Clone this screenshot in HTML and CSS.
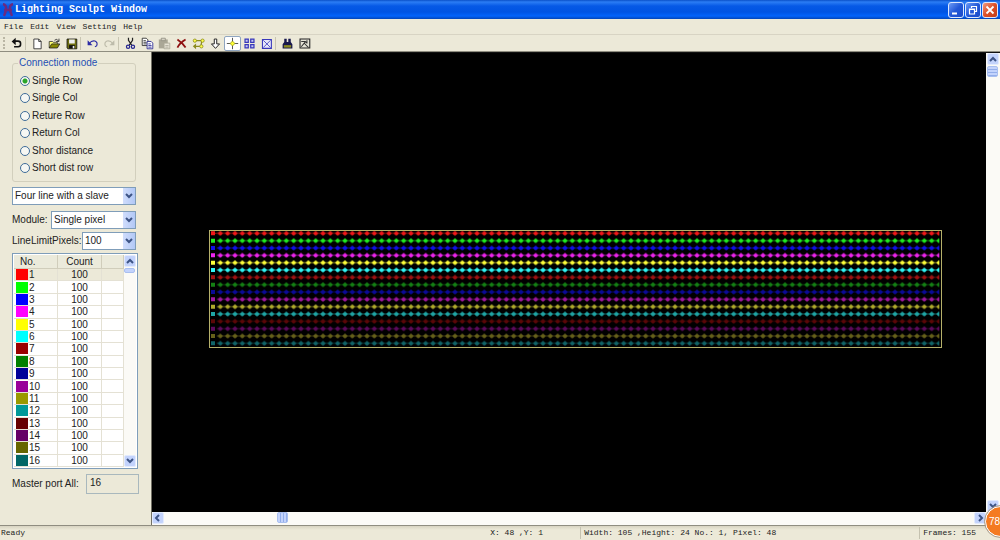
FILE: index.html
```html
<!DOCTYPE html>
<html lang="en">
<head>
<meta charset="utf-8">
<title>Lighting Sculpt Window</title>
<link rel="stylesheet" href="styles.css">
</head>
<body>
<svg class="defs" aria-hidden="true">
  <symbol id="chev-down" viewBox="0 0 8 8"><path d="M1 2l3 3 3-3" fill="none" stroke="#3d5486" stroke-width="2"/></symbol>
  <symbol id="chev-up" viewBox="0 0 8 8"><path d="M1 6l3-3 3 3" fill="none" stroke="#3d5486" stroke-width="2"/></symbol>
  <symbol id="chev-left" viewBox="0 0 8 8"><path d="M5 1L2 4l3 3" fill="none" stroke="#3d5486" stroke-width="2"/></symbol>
  <symbol id="chev-right" viewBox="0 0 8 8"><path d="M3 1l3 3-3 3" fill="none" stroke="#3d5486" stroke-width="2"/></symbol>
</svg>
<div class="window">
  <header class="titlebar">
    <svg class="logo" viewBox="0 0 12 14"><path d="M1 1c4 1 4 5 1 12M11 1c-4 1-4 5-1 12M2 7h8" fill="none" stroke="#6a2a80" stroke-width="2.400"/></svg>
    <h1 class="title">Lighting Sculpt Window</h1>
    <div class="window-buttons">
      <button class="win-btn" aria-label="Minimize"><svg viewBox="0 0 14 14"><path d="M3 10.500h5" stroke="#fff" stroke-width="2"/></svg></button>
      <button class="win-btn" aria-label="Restore"><svg viewBox="0 0 14 14"><path d="M5.500 5V3.500h5v5H9M3.500 6h5v5h-5z" fill="none" stroke="#fff" stroke-width="1.200"/><path d="M5 3.500h6M3 6.500h6" stroke="#fff"/></svg></button>
      <button class="win-btn close" aria-label="Close"><svg viewBox="0 0 14 14"><path d="M3.500 3.500l7 7M10.500 3.500l-7 7" stroke="#fff" stroke-width="1.800"/></svg></button>
    </div>
  </header>
  <nav class="menubar">
    <button>File</button><button>Edit</button><button>View</button><button>Setting</button><button>Help</button>
  </nav>
  <div class="toolbar">
    <span class="grip"></span>
    <button class="tool" aria-label="Back"><svg viewBox="0 0 16 16"><path d="M4 5h6a3 3 0 0 1 3 3v1a3 3 0 0 1-3 3H5" fill="none" stroke="#111" stroke-width="2"/><path d="M2 5.500L7 1v9z" fill="#111"/></svg></button>
    <span class="sep"></span>
    <button class="tool" aria-label="New"><svg viewBox="0 0 16 16"><path d="M3.500 2.500h6l3 3v9h-9z" fill="#fff" stroke="#222"/><path d="M9.500 2.500v3h3" fill="none" stroke="#222"/></svg></button>
    <button class="tool" aria-label="Open"><svg viewBox="0 0 16 16"><path d="M1.500 13.500v-8h4l1 1h5v2" fill="#ffff70" stroke="#333"/><path d="M1.500 13.500l3-5h10l-3 5z" fill="#898900" stroke="#222"/><path d="M8 4q3-3 5 1M13.500 2v3.500H10" fill="none" stroke="#222"/></svg></button>
    <button class="tool" aria-label="Save"><svg viewBox="0 0 16 16"><path d="M2.500 2.500h12v12h-11l-1-1z" fill="#6e6e10" stroke="#111"/><path d="M5 3h7v5H5z" fill="#eee"/><path d="M5 10h7v4H5z" fill="#111"/><path d="M9.500 11h2v3h-2z" fill="#eee"/></svg></button>
    <span class="sep"></span>
    <button class="tool" aria-label="Undo"><svg viewBox="0 0 16 16"><path d="M4 8q3-4 7-3 4 2 2 6l-2 1" fill="none" stroke="#2b2ba5" stroke-width="1.400"/><path d="M2 4v6h6z" fill="#2b2ba5"/></svg></button>
    <button class="tool" aria-label="Redo"><svg viewBox="0 0 16 16"><path d="M12 8q-3-4-7-3-4 2-2 6l2 1" fill="none" stroke="#bdbbaa" stroke-width="1.400"/><path d="M14 4v6H8z" fill="#bdbbaa"/></svg></button>
    <span class="sep"></span>
    <button class="tool" aria-label="Cut"><svg viewBox="0 0 16 16"><path d="M5.500 1v3l4 6M10.500 1v3l-4 6" fill="none" stroke="#222" stroke-width="1.500"/><circle cx="5" cy="12" r="2" fill="none" stroke="#25258f" stroke-width="1.500"/><circle cx="11" cy="12" r="2" fill="none" stroke="#25258f" stroke-width="1.500"/></svg></button>
    <button class="tool" aria-label="Copy"><svg viewBox="0 0 16 16"><path d="M1.500 1.500h5l2 2v7h-7z" fill="#fff" stroke="#222"/><path d="M3 4.500h3M3 6.500h4M3 8.500h4" stroke="#222"/><path d="M7.500 5.500h5l2 2v7h-7z" fill="#fff" stroke="#1d1d8c"/><path d="M9 8.500h3M9 10.500h4M9 12.500h4" stroke="#1d1d8c"/></svg></button>
    <button class="tool" aria-label="Paste" disabled><svg viewBox="0 0 16 16"><path d="M1 3h11v11H1z" fill="#aaa796"/><path d="M4 1.500h5v3H4z" fill="#d5d2c4" stroke="#908e80"/><path d="M7.500 7.500h7v7h-7z" fill="#e6e3d5" stroke="#aaa796"/><path d="M9 10.500h4M9 12.500h4" stroke="#aaa796"/></svg></button>
    <button class="tool" aria-label="Delete"><svg viewBox="0 0 16 16"><path d="M3 3q6 4 10 10M13 3Q6 7 3 13" fill="none" stroke="#8e1010" stroke-width="2.200"/></svg></button>
    <button class="tool" aria-label="Connect"><svg viewBox="0 0 16 16"><path d="M4 4.500h8l-1 7H3" fill="none" stroke="#8a8a20" stroke-width="1.500"/><g fill="#ffff45" stroke="#8a8a20"><circle cx="3.500" cy="4.500" r="2"/><circle cx="13" cy="4.500" r="2"/><circle cx="11.500" cy="11.500" r="2"/></g><path d="M5 8l-4 3.500L5 15z" fill="#8a8a20"/></svg></button>
    <button class="tool" aria-label="Down"><svg viewBox="0 0 16 16"><path d="M6.500 2.500h3v6h3.500L8 14 3 8.500h3.500z" fill="#fff" stroke="#222" stroke-width="1.200"/></svg></button>
    <button class="tool pressed" aria-label="Point"><svg viewBox="0 0 16 16"><path d="M8 1v14M1 8h14" stroke="#333"/><path d="M8 5l3 3-3 3-3-3z" fill="#ffff35" stroke="#9a9a15"/></svg></button>
    <button class="tool" aria-label="Grid"><svg viewBox="0 0 16 16"><path d="M2.500 2.500h4v4h-4zM9.500 2.500h4v4h-4zM2.500 9.500h4v4h-4zM9.500 9.500h4v4h-4z" fill="#c7c8f0" stroke="#3838ba" stroke-width="1.500"/></svg></button>
    <button class="tool" aria-label="Frame"><svg viewBox="0 0 16 16"><path d="M3 3h11v11H3z" fill="#e8e8fa" stroke="#3838ba" stroke-width="1.300"/><path d="M4 4l9 9M13 4l-9 9" stroke="#3838ba"/></svg></button>
    <span class="sep"></span>
    <button class="tool" aria-label="Find"><svg viewBox="0 0 16 16"><path d="M4 2h3v4h2V2h3v4l2 3v5H2V9l2-3z" fill="#17174c"/><path d="M3.500 10h9v3h-9z" fill="#8b8b22"/></svg></button>
    <button class="tool" aria-label="Tools"><svg viewBox="0 0 16 16"><path d="M2.500 2.500h12v11h-12z" fill="#e6e4d8" stroke="#222" stroke-width="1.300"/><path d="M4 5.500h5l2 2M4 12l5-6M8 8l5 5M11 4v4" fill="none" stroke="#333" stroke-width="1.300"/></svg></button>
  </div>
  <main class="workspace">
    <aside class="sidebar">
      <fieldset class="modes">
        <legend>Connection mode</legend>
        <div class="mode-list">
          <label><input type="radio" name="mode" checked>Single Row</label>
          <label><input type="radio" name="mode">Single Col</label>
          <label><input type="radio" name="mode">Reture Row</label>
          <label><input type="radio" name="mode">Return Col</label>
          <label><input type="radio" name="mode">Shor distance</label>
          <label><input type="radio" name="mode">Short dist row</label>
        </div>
      </fieldset>
      <div class="field line-type">
        <span class="combo"><select aria-label="Line type"><option>Four line with a slave</option></select><span class="combo-arrow"><svg><use href="#chev-down"/></svg></span></span>
      </div>
      <div class="field">
        <label for="module">Module:</label>
        <span class="combo module"><select id="module"><option>Single pixel</option></select><span class="combo-arrow"><svg><use href="#chev-down"/></svg></span></span>
      </div>
      <div class="field">
        <label for="limit">LineLimitPixels:</label>
        <span class="combo limit"><select id="limit"><option>100</option></select><span class="combo-arrow"><svg><use href="#chev-down"/></svg></span></span>
      </div>
      <div class="ports">
        <table>
          <thead><tr><th class="no">No.</th><th class="count">Count</th><th></th></tr></thead>
          <tbody>
            <tr class="selected"><td><i class="swatch c1"></i>1</td><td>100</td><td></td></tr>
            <tr><td><i class="swatch c2"></i>2</td><td>100</td><td></td></tr>
            <tr><td><i class="swatch c3"></i>3</td><td>100</td><td></td></tr>
            <tr><td><i class="swatch c4"></i>4</td><td>100</td><td></td></tr>
            <tr><td><i class="swatch c5"></i>5</td><td>100</td><td></td></tr>
            <tr><td><i class="swatch c6"></i>6</td><td>100</td><td></td></tr>
            <tr><td><i class="swatch c7"></i>7</td><td>100</td><td></td></tr>
            <tr><td><i class="swatch c8"></i>8</td><td>100</td><td></td></tr>
            <tr><td><i class="swatch c9"></i>9</td><td>100</td><td></td></tr>
            <tr><td><i class="swatch c10"></i>10</td><td>100</td><td></td></tr>
            <tr><td><i class="swatch c11"></i>11</td><td>100</td><td></td></tr>
            <tr><td><i class="swatch c12"></i>12</td><td>100</td><td></td></tr>
            <tr><td><i class="swatch c13"></i>13</td><td>100</td><td></td></tr>
            <tr><td><i class="swatch c14"></i>14</td><td>100</td><td></td></tr>
            <tr><td><i class="swatch c15"></i>15</td><td>100</td><td></td></tr>
            <tr><td><i class="swatch c16"></i>16</td><td>100</td><td></td></tr>
          </tbody>
        </table>
        <div class="scroll vertical">
          <button class="scroll-btn" aria-label="Scroll list up"><svg><use href="#chev-up"/></svg></button>
          <span class="thumb short"></span>
          <button class="scroll-btn end" aria-label="Scroll list down"><svg><use href="#chev-down"/></svg></button>
        </div>
      </div>
      <div class="field total">
        <label for="total">Master port All:</label>
        <input id="total" type="text" value="16" readonly>
      </div>
    </aside>
    <section class="view">
      <div class="stage">
        <svg class="diagram" viewBox="0 0 2199 354">
          <defs>
            <pattern id="dots" x="1" y="-1" width="22" height="22" patternUnits="userSpaceOnUse">
              <path d="M0 11h22" stroke="#fff" stroke-opacity=".6" stroke-width="3"/>
              <path d="M9 4h4v3h3v2h2v4h-2v3h-3v2H9v-2H6v-3H4V9h2V7h3z" fill="#fff"/>
            </pattern>
            <mask id="wires" maskUnits="userSpaceOnUse" x="0" y="0" width="2199" height="354">
              <path d="M23 0h2168v351H23z" fill="url(#dots)"/>
              <path d="M12 4v346" stroke="#fff" stroke-width="12" stroke-dasharray="12 10"/>
              <path d="M12 10h11" stroke="#fff" stroke-width="2"/>
            </mask>
          </defs>
          <g mask="url(#wires)">
            <rect width="2199" height="21" fill="#f21818"/>
            <rect y="21" width="2199" height="22" fill="#20ec20"/>
            <rect y="43" width="2199" height="22" fill="#1010e8"/>
            <rect y="65" width="2199" height="22" fill="#ee25ee"/>
            <rect y="87" width="2199" height="22" fill="#ffff3a"/>
            <rect y="109" width="2199" height="22" fill="#30f5f5"/>
            <rect y="131" width="2199" height="22" fill="#a01212"/>
            <rect y="153" width="2199" height="22" fill="#148014"/>
            <rect y="175" width="2199" height="22" fill="#0a0a98"/>
            <rect y="197" width="2199" height="22" fill="#a018a0"/>
            <rect y="219" width="2199" height="22" fill="#b0aa2c"/>
            <rect y="241" width="2199" height="22" fill="#1fa5a5"/>
            <rect y="263" width="2199" height="22" fill="#5c0707"/>
            <rect y="285" width="2199" height="22" fill="#5c0a5c"/>
            <rect y="307" width="2199" height="22" fill="#66601a"/>
            <rect y="329" width="2199" height="22" fill="#106468"/>
          </g>
          <rect x="1.500" y="1.500" width="2196" height="351" fill="none" stroke="#b5b06a" stroke-width="3"/>
        </svg>
      </div>
      <div class="scroll vertical main-v">
        <button class="scroll-btn" aria-label="Scroll up"><svg><use href="#chev-up"/></svg></button>
        <span class="thumb"></span>
        <button class="scroll-btn end" aria-label="Scroll down"><svg><use href="#chev-down"/></svg></button>
      </div>
      <div class="scroll horizontal">
        <button class="scroll-btn" aria-label="Scroll left"><svg><use href="#chev-left"/></svg></button>
        <span class="thumb across"></span>
        <button class="scroll-btn end" aria-label="Scroll right"><svg><use href="#chev-right"/></svg></button>
      </div>
    </section>
  </main>
  <footer class="statusbar">
    <span class="ready">Ready</span>
    <span class="position">X: 48 ,Y: 1</span>
    <span class="details">Width: 105 ,Height: 24 No.: 1, Pixel: 48</span>
    <span class="frames">Frames: 155</span>
  </footer>
  <div class="badge">78</div>
</div>
</body>
</html>
```

FILE: styles.css
```css
* { box-sizing: border-box; }
body { margin: 0; background: #ece9d8; color: #222; font: 10px/12px "Liberation Sans", Arial, sans-serif; }
button { padding: 0; border: 0; background: none; font: inherit; color: inherit; }
svg { display: block; }
.defs { position: absolute; width: 0; height: 0; }

.window { position: relative; display: flex; flex-direction: column; min-height: 100vh; overflow: hidden; }

.titlebar { display: flex; align-items: center; height: 19px; padding: 0 2px; background: linear-gradient(#0a50c8 0, #2b7df5 2px, #0659e6 6px, #0054e3 12px, #0364fb 16px, #0345b8 19px); }
.logo { width: 12px; height: 14px; }
.title { flex: 1; margin: 0; padding-left: 1px; color: #fff; font: bold 10px/16px "Liberation Mono", monospace; }
.window-buttons { display: flex; gap: 1px; }
.win-btn { width: 16px; height: 16px; border: 1px solid #dce8ff; border-radius: 3px; background: linear-gradient(135deg, #6d9bf5, #2258d8 50%, #1a4ac8); }
.win-btn svg { width: 14px; height: 14px; }
.win-btn.close { background: linear-gradient(135deg, #f09a80, #dc4f28 50%, #c23d18); }

.menubar { display: flex; align-items: center; gap: 7px; height: 16px; padding-left: 4px; border-bottom: 1px solid #d8d4c4; font: 8px/14px "Liberation Mono", monospace; }

.toolbar { display: flex; align-items: center; height: 17px; padding-left: 3px; border-bottom: 1px solid #8f8d80; }
.grip { width: 5px; height: 12px; border-left: 2px dotted #bab6a4; }
.tool { width: 17px; height: 15px; display: grid; place-items: center; border: 1px solid transparent; border-radius: 2px; }
.tool svg { width: 13px; height: 13px; }
.tool.pressed { border-color: #8fa5c0; background: #fff; }
.sep { width: 4px; height: 13px; border-left: 1px solid #c8c5b2; }

.workspace { flex: 1; display: flex; }
.sidebar { width: 152px; flex: none; padding: 5px 15px 0 12px; border-right: 1px solid #716f64; }
.modes { min-width: 0; margin: 0 0 5px; padding: 3px 7px 4px; border: 1px solid #d2cfbd; border-radius: 3px; }
.modes legend { margin-left: -2px; padding: 0 1px; color: #2450b4; }
.mode-list { display: flex; flex-direction: column; height: 105px; }
.mode-list label { flex: 1; display: flex; align-items: center; gap: 2px; }
.mode-list input { appearance: none; width: 10px; height: 10px; margin: 0; border: 1px solid #3f6c98; border-radius: 50%; background: #f6f7f3; }
.mode-list input:checked { background: radial-gradient(circle, #2aa52a 0 2px, #f6f7f3 3px); }

.field { display: flex; align-items: center; justify-content: space-between; margin-bottom: 3px; white-space: nowrap; }
.line-type { margin-bottom: 6px; }
.combo { display: grid; flex: none; width: 100%; height: 18px; border: 1px solid #7f9db9; background: #fff; }
.combo.module { width: 85px; }
.combo.limit { width: 54px; }
.combo select { grid-area: 1 / 1; appearance: none; width: 100%; border: 0; padding: 0 2px; background: none; color: #222; font: inherit; }
.combo-arrow { grid-area: 1 / 1; justify-self: end; display: grid; place-items: center; width: 12px; background: linear-gradient(90deg, #d0ddfc, #b2c8f6); pointer-events: none; }
.combo-arrow svg { width: 8px; height: 8px; }

.ports { display: flex; width: 126px; margin-bottom: 5px; padding: 1px; border: 1px solid #7f9db9; background: #fff; }
.ports table { flex: 1; height: 212px; border-collapse: separate; border-spacing: 0; table-layout: fixed; }
.ports th { height: 14px; padding: 0; background: #ebeadb; border-right: 1px solid #d0cdbb; border-bottom: 1px solid #d0cdbb; font-weight: normal; line-height: 13px; }
.ports .no { width: 44px; text-align: left; padding-left: 6px; }
.ports .count { width: 44px; }
.ports td { padding: 0; border-right: 1px solid #e4e1d4; border-bottom: 1px solid #e4e1d4; text-align: center; line-height: 11px; }
.ports td:first-child { text-align: left; padding-left: 2px; }
.selected td { background: #ece9d8; }
.swatch { display: inline-block; width: 12px; height: 11px; margin-right: 1px; vertical-align: top; }
.c1 { background: #f00; }
.c2 { background: #0f0; }
.c3 { background: #00f; }
.c4 { background: #f0f; }
.c5 { background: #ff0; }
.c6 { background: #0ff; }
.c7 { background: #900; }
.c8 { background: #008000; }
.c9 { background: #000099; }
.c10 { background: #909; }
.c11 { background: #990; }
.c12 { background: #099; }
.c13 { background: #600; }
.c14 { background: #606; }
.c15 { background: #660; }
.c16 { background: #066; }

.total input { width: 53px; height: 20px; margin-right: -3px; padding: 0 3px 3px; border: 1px solid #a9b8bd; background: #ece9d8; color: #222; font: inherit; }

.scroll { display: flex; gap: 1px; background: #fbfaf6; }
.vertical { flex-direction: column; width: 12px; }
.horizontal { height: 13px; }
.scroll-btn { display: grid; place-items: center; width: 12px; height: 12px; flex: none; border: 1px solid #e2eafd; border-radius: 2px; background: #c3d3fc; }
.scroll-btn svg { width: 8px; height: 8px; }
.vertical .end { margin-top: auto; }
.horizontal .end { margin-left: auto; }
.thumb { width: 11px; height: 11px; border: 1px solid #a9bff0; border-radius: 2px; background: repeating-linear-gradient(#c3d3fc 0 2px, #93aeea 2px 3px); }
.thumb.short { height: 5px; background: #c3d3fc; }
.thumb.across { margin-left: 112px; background: repeating-linear-gradient(90deg, #c3d3fc 0 2px, #93aeea 2px 3px); }

.view { flex: 1; display: grid; grid-template: 1fr 13px / 1fr 14px; border-top: 1px solid #111; min-width: 0; }
.stage { padding: 177px 44px 0 57px; background: #000; }
.diagram { width: 100%; }
.main-v { width: 14px; padding-left: 1px; }
.horizontal { grid-column: 1; }

.statusbar { display: flex; align-items: center; height: 15px; padding: 0 24px 0 1px; border-top: 1px solid #8f8d80; background: linear-gradient(#d8d4c2, #ece9d8 4px); font: 8px/12px "Liberation Mono", monospace; white-space: pre; }
.ready { flex: 1; }
.position { width: 90px; }
.details { width: 339px; padding-left: 3px; border-left: 1px solid #c5c2b0; }
.frames { padding-left: 3px; border-left: 1px solid #c5c2b0; }

.badge { position: absolute; right: -16px; bottom: 3px; width: 31px; height: 31px; padding-left: 3px; border: 1px solid #fff; outline: 1px solid #a99a88; border-radius: 50%; background: #f47a20; color: #fff; font-size: 10px; line-height: 29px; }
```
